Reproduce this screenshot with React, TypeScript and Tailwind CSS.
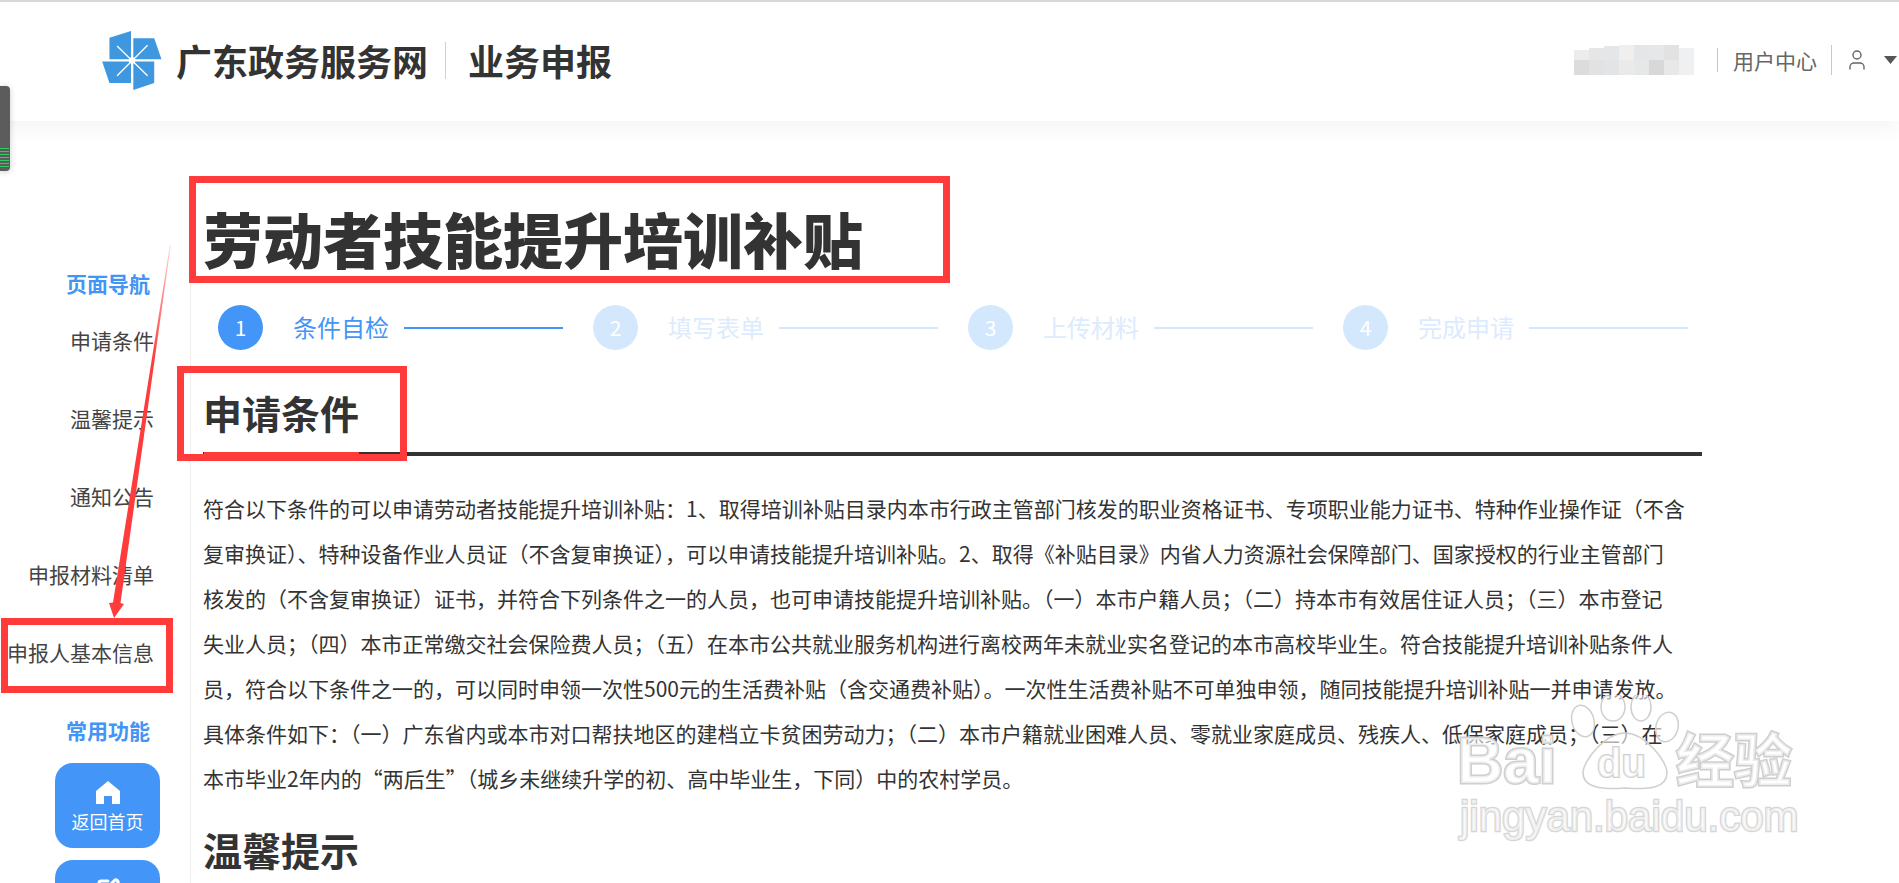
import React from 'react';
import { SquarePen, User } from 'lucide-react';

const navItems = ['申请条件', '温馨提示', '通知公告', '申报材料清单', '申报人基本信息'];

const steps = ['条件自检', '填写表单', '上传材料', '完成申请'];

const bodyLines = [
  '符合以下条件的可以申请劳动者技能提升培训补贴：1、取得培训补贴目录内本市行政主管部门核发的职业资格证书、专项职业能力证书、特种作业操作证（不含',
  '复审换证）、特种设备作业人员证（不含复审换证），可以申请技能提升培训补贴。2、取得《补贴目录》内省人力资源社会保障部门、国家授权的行业主管部门',
  '核发的（不含复审换证）证书，并符合下列条件之一的人员，也可申请技能提升培训补贴。（一）本市户籍人员；（二）持本市有效居住证人员；（三）本市登记',
  '失业人员；（四）本市正常缴交社会保险费人员；（五）在本市公共就业服务机构进行离校两年未就业实名登记的本市高校毕业生。符合技能提升培训补贴条件人',
  '员，符合以下条件之一的，可以同时申领一次性500元的生活费补贴（含交通费补贴）。一次性生活费补贴不可单独申领，随同技能提升培训补贴一并申请发放。',
  '具体条件如下：（一）广东省内或本市对口帮扶地区的建档立卡贫困劳动力；（二）本市户籍就业困难人员、零就业家庭成员、残疾人、低保家庭成员；（三）在',
  '本市毕业2年内的“两后生”（城乡未继续升学的初、高中毕业生，下同）中的农村学员。',
];

const blurCells = [
  'h-[10px] bg-[#ececec]',
  'h-[12px] bg-[#e6e6e6]',
  'h-[14px] bg-[#e4e6e8]',
  'h-[15px] bg-[#f0efed]',
  'h-[15px] bg-[#e4e6e8]',
  'h-[15px] bg-[#e5e7e8]',
  'h-[15px] bg-[#e2e2e2]',
  'h-[12px] bg-[#eef0f2]',
  'h-[15px] bg-[#dcdcdc]',
  'h-[15px] bg-[#e2e2e2]',
  'h-[15px] bg-[#e2e4e6]',
  'h-[15px] bg-[#eaeaea]',
  'h-[15px] bg-[#e6e8e8]',
  'h-[15px] bg-[#d8d8d8]',
  'h-[15px] bg-[#e8e8e8]',
  'h-[15px] bg-[#f0f0f0]',
];

const Logo = () => (
  <svg viewBox="30 22 186 184" className="w-[62px] h-[61px] shrink-0">
    <path d="M55 45 L120 25 L120 110 L55 110 Z" fill="#3f97e0" />
    <path d="M127 47 L190 47 L212 110 L127 110 Z" fill="#3f97e0" />
    <path d="M33 117 L120 117 L120 182 L55 182 Z" fill="#3f97e0" />
    <path d="M127 117 L190 117 L190 182 L127 203 Z" fill="#3f97e0" />
    <path d="M78 70 L170 160 M170 68 L78 160" stroke="#fff" strokeWidth="4" />
    <circle cx="123" cy="114" r="10" fill="#fff" />
  </svg>
);

const Watermark = () => (
  <div className="absolute left-[1455px] top-[695px] w-[345px] h-[150px] pointer-events-none font-['Liberation_Sans',sans-serif]">
    <svg viewBox="0 0 345 100" className="absolute left-0 top-0 w-[345px] h-[100px]">
      <g fill="#ffffff" fillOpacity="0.6" stroke="#cfcfcf" strokeWidth="1.5">
        <ellipse cx="128" cy="26" rx="11" ry="16" transform="rotate(-15 128 26)" />
        <ellipse cx="158" cy="12" rx="12" ry="14" />
        <ellipse cx="186" cy="12" rx="10" ry="14" />
        <ellipse cx="212" cy="32" rx="11" ry="15" transform="rotate(15 212 32)" />
        <path d="M170 38 C190 38 212 66 212 78 C212 92 196 95 170 93 C146 95 128 92 128 78 C128 66 150 38 170 38 Z" />
      </g>
    </svg>
    <span className="absolute left-[2px] top-[31px] text-[64px] leading-[70px] font-bold text-white/60 [-webkit-text-stroke:3px_#cfcfcf] [paint-order:stroke_fill]">
      Bai
    </span>
    <span className="absolute left-[142px] top-[44px] text-[40px] leading-[48px] font-bold text-white/60 [-webkit-text-stroke:2px_#cfcfcf] [paint-order:stroke_fill]">
      du
    </span>
    <span className="absolute left-[221px] top-[26px] text-[58px] leading-[72px] font-bold text-white/60 font-['Noto_Sans_CJK_SC',sans-serif] [-webkit-text-stroke:3px_#cfcfcf] [paint-order:stroke_fill]">
      经验
    </span>
    <span className="absolute left-[5px] top-[97px] text-[42px] leading-[50px] text-white/60 [-webkit-text-stroke:2.5px_#d6d6d6] [paint-order:stroke_fill]">
      jingyan.baidu.com
    </span>
  </div>
);

const App = () => {
  return (
    <div className="relative w-[1899px] h-[883px] overflow-hidden bg-white text-[#333] font-['Noto_Sans_CJK_SC',sans-serif]">
      {/* Header */}
      <header className="relative z-10 h-[121px] border-t-2 border-[#d8d8d8] bg-white shadow-[0_6px_22px_rgba(0,0,0,0.05)] flex items-center pl-[101px] pr-[2px] pb-[3px]">
        <Logo />
        <span className="ml-[13px] text-[36px] leading-none font-bold">广东政务服务网</span>
        <span className="ml-[17px] w-px h-[37px] bg-[#d0d0d0]" />
        <span className="ml-[22px] text-[36px] leading-none font-bold">业务申报</span>
        <div className="ml-auto flex items-center">
          <div className="w-[120px] grid grid-cols-8 items-end">
            {blurCells.map((cell, i) => (
              <div key={i} className={cell} />
            ))}
          </div>
          <span className="ml-[23px] w-px h-[24px] bg-[#c8c8c8]" />
          <span className="ml-[15px] text-[21px] leading-none text-[#666]">用户中心</span>
          <span className="ml-[14px] w-px h-[30px] bg-[#c8c8c8]" />
          <User className="ml-[13px] w-[24px] h-[24px] text-[#666]" strokeWidth={1.4} />
          <svg viewBox="0 0 13 8" className="ml-[15px] w-[13px] h-[8px]">
            <polygon points="0,0 13,0 6.5,8" fill="#555" />
          </svg>
        </div>
      </header>

      <main className="flex pt-[55px]">
        {/* Left nav */}
        <aside className="w-[191px] h-[800px] shrink-0 border-r border-[#eeeeee] pt-[90px]">
          <div className="pr-[40px] text-right text-[21px] leading-[35px] font-bold text-[#4395f5]">页面导航</div>
          {navItems.map((item) => (
            <div key={item} className="pr-[36px] text-right text-[21px] leading-[78px] text-[#444]">
              {item}
            </div>
          ))}
          <div className="mt-[21px] pr-[40px] text-right text-[21px] leading-[36px] font-bold text-[#4395f5]">常用功能</div>
          <div className="mt-[15px] ml-[55px] w-[105px] h-[85px] rounded-[18px] bg-[#4395f7] flex flex-col items-center pt-[18px] text-white">
            <svg viewBox="0 0 24 23" className="w-[24px] h-[23px]">
              <path d="M12 0 L24 10 L24 23 L16 23 L16 15 L8 15 L8 23 L0 23 L0 10 Z" fill="#fff" />
            </svg>
            <span className="mt-[4px] text-[18px] leading-[26px]">返回首页</span>
          </div>
          <div className="mt-[12px] ml-[55px] w-[105px] h-[85px] rounded-[18px] bg-[#4395f7] flex flex-col items-center pt-[18px] text-white">
            <SquarePen className="w-[24px] h-[24px]" strokeWidth={3} />
          </div>
        </aside>

        {/* Content */}
        <section className="w-[1499px] ml-[12px] pt-[28px]">
          <h1 className="text-[60px] leading-[68px] font-black">劳动者技能提升培训补贴</h1>

          <div className="mt-[33px] pl-[15px] flex items-center">
            {steps.map((step, i) => (
              <div key={step} className="w-[375px] shrink-0 flex items-center">
                <span
                  className={
                    i === 0
                      ? 'w-[45px] h-[45px] rounded-full bg-[#4395f7] text-white text-[21px] flex items-center justify-center'
                      : 'w-[45px] h-[45px] rounded-full bg-[#d4e8fd] text-white text-[21px] flex items-center justify-center'
                  }
                >
                  {i + 1}
                </span>
                <span
                  className={
                    i === 0
                      ? 'ml-[30px] pb-[2px] text-[24px] leading-none text-[#4395f7]'
                      : 'ml-[30px] pb-[2px] text-[24px] leading-none text-[#dcebfd]'
                  }
                >
                  {step}
                </span>
                <span className={i === 0 ? 'ml-[15px] w-[159px] h-[2px] bg-[#4395f7]' : 'ml-[15px] w-[159px] h-[2px] bg-[#d4e8fd]'} />
              </div>
            ))}
          </div>

          <h2 className="mt-[34px] pb-[12px] border-b-4 border-[#333] text-[39px] leading-[56px] font-bold">申请条件</h2>

          <div className="mt-[30px] text-[21px] leading-[45px]">
            {bodyLines.map((line) => (
              <p key={line} className="whitespace-nowrap">
                {line}
              </p>
            ))}
          </div>

          <h2 className="mt-[20px] text-[39px] leading-[56px] font-bold">温馨提示</h2>
        </section>
      </main>

      {/* Small widget on the left edge */}
      <div className="absolute left-0 top-[86px] z-20 w-[10px] h-[85px] rounded-r-[4px] bg-[#5c5c5c] shadow-[0_1px_6px_rgba(0,0,0,0.2)] flex flex-col justify-end gap-[2px] pb-[4px]">
        {[0, 1, 2, 3, 4, 5, 6].map((n) => (
          <div key={n} className="w-[9px] h-px bg-[#2ecc5e]" />
        ))}
      </div>

      <Watermark />

      {/* Red annotations drawn over the page */}
      <div className="absolute z-20 left-[189px] top-[176px] w-[761px] h-[107px] border-[7px] border-[#ff3b3b]" />
      <div className="absolute z-20 left-[177px] top-[366px] w-[230px] h-[95px] border-[7px] border-[#ff3b3b]" />
      <div className="absolute z-20 left-[204px] top-[452px] w-[155px] h-[2px] bg-[#ff3b3b]" />
      <div className="absolute z-20 left-[1px] top-[618px] w-[172px] h-[75px] border-[7px] border-[#ff3b3b]" />
      <svg viewBox="0 0 1899 883" className="absolute z-20 left-0 top-0 w-[1899px] h-[883px] pointer-events-none">
        <defs>
          <linearGradient id="arrowFade" x1="0" y1="245" x2="0" y2="360" gradientUnits="userSpaceOnUse">
            <stop offset="0" stopColor="#ff3b3b" stopOpacity="0.25" />
            <stop offset="1" stopColor="#ff3b3b" />
          </linearGradient>
        </defs>
        <polygon points="170,245 170.6,246 120.5,603 124,604 114,618 109,603 113,602.5" fill="url(#arrowFade)" />
      </svg>
    </div>
  );
};

export default App;
